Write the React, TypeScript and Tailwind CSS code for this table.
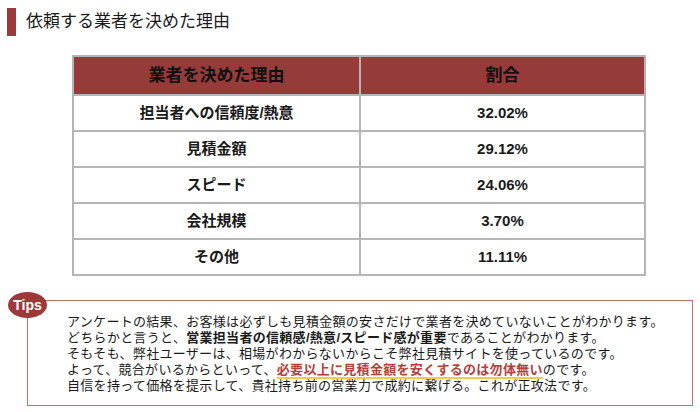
import React from "react";

const rows = [
  { reason: "担当者への信頼度/熱意", rate: "32.02%" },
  { reason: "見積金額", rate: "29.12%" },
  { reason: "スピード", rate: "24.06%" },
  { reason: "会社規模", rate: "3.70%" },
  { reason: "その他", rate: "11.11%" },
];

const font = { fontFamily: '"Liberation Sans", "Noto Sans CJK JP", sans-serif' };

export default function App() {
  return (
    <div className="w-[700px] h-[412px] bg-white text-[#1a1a1a] overflow-hidden" style={font}>
      {/* Title */}
      <div className="flex items-center gap-[10px] pt-[8px] pl-[7px]">
        <div className="w-[9px] h-[28px] bg-[#9b3a38]" />
        <h1 className="text-[17px] leading-[28px] font-normal">依頼する業者を決めた理由</h1>
      </div>

      {/* Table */}
      <div className="ml-[72px] mt-[19px] w-[574px] border-2 border-[#b5b5b5]">
        <div className="grid grid-cols-2 h-[37px] bg-[#963b39] font-bold text-[17px] text-[#111]">
          <div className="flex items-center justify-center">業者を決めた理由</div>
          <div className="flex items-center justify-center border-l-2 border-[#b5b5b5]">割合</div>
        </div>
        {rows.map((r) => (
          <div key={r.reason} className="grid grid-cols-2 h-[36px] border-t-2 border-[#b5b5b5] font-bold text-[15px]">
            <div className="flex items-center justify-center">{r.reason}</div>
            <div className="flex items-center justify-center border-l-2 border-[#b5b5b5]">{r.rate}</div>
          </div>
        ))}
      </div>

      {/* Tips */}
      <div className="relative ml-[27px] mt-[24px] w-[666px] h-[106px] border border-[#c46f6d] pl-[39px] pt-[13px] text-[13px] leading-[16px] tracking-[0.3px] text-[#1a1a1a]">
        <div className="absolute left-[-20px] top-[-9px] w-[39px] h-[26px] rounded-[50%] bg-[#9b3a38] flex items-center justify-center text-white font-bold text-[14px] tracking-normal">
          Tips
        </div>
        <p>アンケートの結果、お客様は必ずしも見積金額の安さだけで業者を決めていないことがわかります。</p>
        <p>
          どちらかと言うと、<span className="font-bold">営業担当者の信頼感/熱意/スピード感が重要</span>であることがわかります。
        </p>
        <p>そもそも、弊社ユーザーは、相場がわからないからこそ弊社見積サイトを使っているのです。</p>
        <p>
          よって、競合がいるからといって、
          <span className="font-bold text-[#b5403b] border-b-2 border-[#f3c84e]">必要以上に見積金額を安くするのは勿体無い</span>
          のです。
        </p>
        <p>自信を持って価格を提示して、貴社持ち前の営業力で成約に繋げる。これが正攻法です。</p>
      </div>
    </div>
  );
}
